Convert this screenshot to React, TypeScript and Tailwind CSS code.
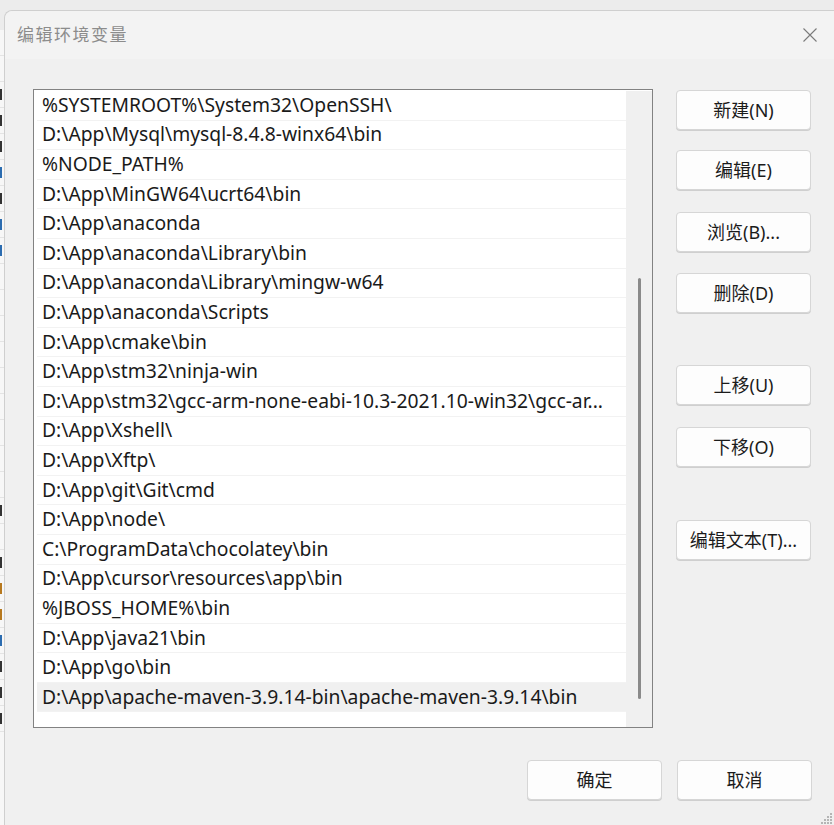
const paths = [
  "%SYSTEMROOT%\\System32\\OpenSSH\\",
  "D:\\App\\Mysql\\mysql-8.4.8-winx64\\bin",
  "%NODE_PATH%",
  "D:\\App\\MinGW64\\ucrt64\\bin",
  "D:\\App\\anaconda",
  "D:\\App\\anaconda\\Library\\bin",
  "D:\\App\\anaconda\\Library\\mingw-w64",
  "D:\\App\\anaconda\\Scripts",
  "D:\\App\\cmake\\bin",
  "D:\\App\\stm32\\ninja-win",
  "D:\\App\\stm32\\gcc-arm-none-eabi-10.3-2021.10-win32\\gcc-ar...",
  "D:\\App\\Xshell\\",
  "D:\\App\\Xftp\\",
  "D:\\App\\git\\Git\\cmd",
  "D:\\App\\node\\",
  "C:\\ProgramData\\chocolatey\\bin",
  "D:\\App\\cursor\\resources\\app\\bin",
  "%JBOSS_HOME%\\bin",
  "D:\\App\\java21\\bin",
  "D:\\App\\go\\bin",
  "D:\\App\\apache-maven-3.9.14-bin\\apache-maven-3.9.14\\bin",
];

const sideButtons = [
  { label: "新建(N)", mt: "mt-0" },
  { label: "编辑(E)", mt: "mt-[20px]" },
  { label: "浏览(B)...", mt: "mt-[22px]" },
  { label: "删除(D)", mt: "mt-[21px]" },
  { label: "上移(U)", mt: "mt-[52px]" },
  { label: "下移(O)", mt: "mt-[22px]" },
  { label: "编辑文本(T)...", mt: "mt-[53px]" },
];

// fragments of the window peeking out behind the dialog
const behind = ["", "", "#333", "#333", "#333", "#2b6cb0", "#333", "#2b6cb0", "#2b6cb0", "", "", "", "", "", "", "", "", "", "#333", "", "#333", "#b7791f", "#b7791f", "#2b6cb0", "#333", "#333", "#333"];

function Button({ label, className = "" }: { label: string; className?: string }) {
  return (
    <button
      className={`h-[40px] w-[135px] rounded-[4px] border border-[#d6d6d6] bg-[#fdfdfd] text-[18px] text-[#1b1b1b] shadow-[0_1px_0_#cfcfcf] ${className}`}
    >
      {label}
    </button>
  );
}

export default function App() {
  return (
    <div
      className="flex h-[825px] w-[834px] overflow-hidden bg-[#ececec]"
      style={{ fontFamily: '"Noto Sans", "Noto Sans CJK SC", sans-serif' }}
    >
      <div className="mt-[30px] flex w-[4px] flex-col overflow-hidden bg-[#f7f7f7]">
        {behind.map((c, i) => (
          <div key={i} className="flex h-[26px] items-center border-b border-[#e4e4e4]">
            {c && <div className="h-[11px] w-[2px]" style={{ backgroundColor: c }} />}
          </div>
        ))}
      </div>

      <div className="mt-[10px] flex flex-1 flex-col rounded-tl-[8px] border-l border-t border-[#cfcfcf] bg-[#f0f0f0]">
        <div className="flex h-[48px] items-center justify-between rounded-tl-[8px] bg-[#f3f3f3] pl-[12px] pr-[16px]">
          <span className="text-[17px] tracking-[1.5px] text-[#8c8c8c]">编辑环境变量</span>
          <svg width="16" height="16" viewBox="0 0 16 16" className="mb-[1px]">
            <path d="M1.5 1.5 L14.5 14.5 M14.5 1.5 L1.5 14.5" stroke="#7a7a7a" strokeWidth="1.1" />
          </svg>
        </div>

        <div className="flex pl-[28px] pt-[30px]">
          <div className="flex h-[639px] w-[620px] border border-[#828282] bg-white pt-[1px]">
            <div className="flex w-[592px] flex-col overflow-hidden pl-[3px]">
              {paths.map((p, i) => (
                <div
                  key={i}
                  className={`flex h-[29.6px] items-center border-b border-[#f2f2f2] pl-[5px] text-[19.3px] whitespace-nowrap text-[#1a1a1a] ${
                    i === paths.length - 1 ? "bg-[#f0f0f0]" : ""
                  }`}
                >
                  {p}
                </div>
              ))}
            </div>
            <div className="flex flex-1 justify-center bg-[#f0f0f0] pt-[187px]">
              <div className="h-[421px] w-[3px] rounded-full bg-[#8a8a8a]" />
            </div>
          </div>

          <div className="ml-[23px] flex flex-col pt-[1px]">
            {sideButtons.map((b) => (
              <Button key={b.label} label={b.label} className={b.mt} />
            ))}
          </div>
        </div>

        <div className="mt-[32px] flex gap-[15px] pl-[522px]">
          <Button label="确定" />
          <Button label="取消" />
        </div>

        <div className="mt-[11px] flex justify-end pr-[1px]">
          <svg width="14" height="14" viewBox="0 0 14 14">
            {[
              [11, 2],
              [8, 5],
              [11, 5],
              [5, 8],
              [8, 8],
              [11, 8],
              [2, 11],
              [5, 11],
              [8, 11],
              [11, 11],
            ].map(([x, y], i) => (
              <rect key={i} x={x} y={y} width="2" height="2" fill="#b5b5b5" />
            ))}
          </svg>
        </div>
      </div>
    </div>
  );
}
